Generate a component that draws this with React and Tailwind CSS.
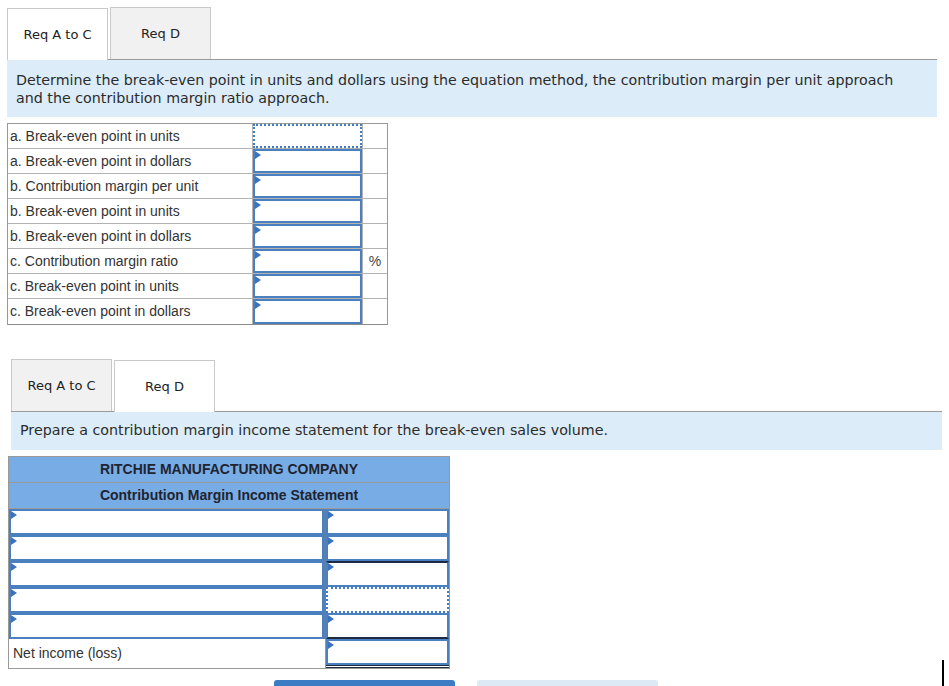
import React from "react";

const verdana = { fontFamily: '"DejaVu Sans", Verdana, sans-serif' };
const arial = { fontFamily: '"Liberation Sans", Arial, sans-serif' };

const rowsA = [
  { label: "a. Break-even point in units", focus: true },
  { label: "a. Break-even point in dollars" },
  { label: "b. Contribution margin per unit" },
  { label: "b. Break-even point in units" },
  { label: "b. Break-even point in dollars" },
  { label: "c. Contribution margin ratio", unit: "%" },
  { label: "c. Break-even point in units" },
  { label: "c. Break-even point in dollars" },
];

const Marker = () => (
  <span className="absolute left-0 top-0 w-0 h-0 border-t-[4px] border-b-[4px] border-l-[6px] border-t-transparent border-b-transparent border-l-[#3a72bd]" />
);

const InputCell = ({ focus, marker = true, extra = "" }) => (
  <div
    className={
      "relative h-full w-full bg-white " +
      (focus
        ? "border-2 border-dotted border-[#3f7cc4] "
        : "border-2 border-[#4a7fc0] ") +
      extra
    }
  >
    {marker && !focus && <Marker />}
  </div>
);

const Tabs = ({ active }) => (
  <div className="flex gap-[2px] h-[52px] items-end">
    {["Req A to C", "Req D"].map((t, i) => (
      <div
        key={t}
        className={
          "w-[101px] h-[52px] flex items-center justify-center text-[13px] text-[#222] border border-b-0 border-[#c9c9c9] " +
          (i === active ? "bg-white relative top-[1px] z-10" : "bg-[#f1f1f1]")
        }
        style={verdana}
      >
        {t}
      </div>
    ))}
  </div>
);

export default function App() {
  return (
    <div className="relative w-[949px] h-[686px] overflow-hidden bg-white">
      {/* Part A-C */}
      <div className="pt-[7px] pl-[7px] pr-[12px]">
        <Tabs active={0} />
        <div
          className="border-t border-[#9a9a9a] bg-[#dcedf9] h-[58px] px-[9px] pt-[11px] text-[14.25px] leading-[18px] text-[#2b2b2b] whitespace-nowrap"
          style={verdana}
        >
          Determine the break-even point in units and dollars using the equation method, the contribution margin per unit approach
          <br />
          and the contribution margin ratio approach.
        </div>
        <div className="mt-[6px] w-[381px] border border-[#999] border-b-[#8a8a8a]" style={arial}>
          {rowsA.map((r, i) => (
            <div
              key={i}
              className={
                "flex h-[25px] " + (i < rowsA.length - 1 ? "border-b border-[#b3b3b3]" : "")
              }
            >
              <div className="w-[246px] pl-[2px] flex items-center text-[14px] text-[#333] border-r border-[#b3b3b3]">
                {r.label}
              </div>
              <div className="w-[110px]">
                <InputCell focus={r.focus} />
              </div>
              <div className="w-[25px] flex items-center justify-center text-[14px] text-[#444] border-l border-[#b3b3b3]">
                {r.unit || ""}
              </div>
            </div>
          ))}
        </div>
      </div>

      {/* Part D */}
      <div className="mt-[34px] pl-[11px] pr-[7px]">
        <Tabs active={1} />
        <div
          className="border-t border-[#9a9a9a] bg-[#dcedf9] h-[39px] px-[9px] flex items-center text-[14.25px] text-[#2b2b2b]"
          style={verdana}
        >
          Prepare a contribution margin income statement for the break-even sales volume.
        </div>
      </div>

      <div className="ml-[8px] mt-[6px] w-[442px] border border-[#999]" style={arial}>
        <div className="h-[26px] bg-[#78ace5] border-b border-[#9a9a9a] flex items-center justify-center text-[14px] font-bold text-[#1f2430]">
          RITCHIE MANUFACTURING COMPANY
        </div>
        <div className="h-[26px] bg-[#78ace5] border-b border-[#9a9a9a] flex items-center justify-center text-[14px] font-bold text-[#1f2430]">
          Contribution Margin Income Statement
        </div>
        {[0, 1, 2, 3, 4].map((i) => (
          <div key={i} className="flex h-[26px]">
            <div className="w-[317px] border-r-2 border-[#5b7fae]">
              <InputCell />
            </div>
            <div className="flex-1">
              <InputCell
                focus={i === 3}
                extra={i === 2 ? "border-t-[#1c2a44]" : i === 4 ? "border-b-[#1c2a44]" : ""}
              />
            </div>
          </div>
        ))}
        <div className="flex h-[29px]">
          <div className="w-[317px] pl-[4px] flex items-center text-[14px] text-[#333] border-r border-[#999]">
            Net income (loss)
          </div>
          <div className="flex-1 border-b-[3px] border-double border-[#1c2a44]">
            <InputCell />
          </div>
        </div>
      </div>

      {/* buttons below */}
      <div className="flex gap-[22px] ml-[274px] mt-[11px]">
        <div className="w-[181px] h-[20px] rounded-[3px] bg-[#3c7cc4]" />
        <div className="w-[181px] h-[20px] rounded-[3px] bg-[#dde9f5]" />
      </div>

      <div className="absolute left-[942px] top-[660px] w-[2px] h-[26px] bg-black" />
    </div>
  );
}
